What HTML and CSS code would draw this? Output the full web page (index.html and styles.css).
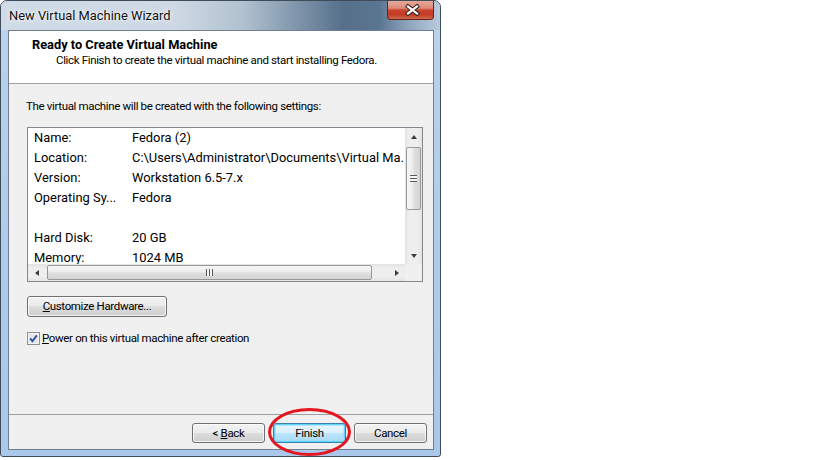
FILE: index.html
```html
<!DOCTYPE html>
<html>
<head>
<meta charset="utf-8">
<link rel="stylesheet" href="styles.css">
</head>
<body>
<div class="window">
  <div class="titlebar">
    <span class="title">New Virtual Machine Wizard</span>
    <div class="close">
      <svg width="45" height="18" viewBox="0 0 45 18">
        <path d="M20 5.5 L29 12.5 M29 5.5 L20 12.5" stroke="#3a2a28" stroke-width="4.2" stroke-linecap="square" fill="none"/>
        <path d="M20 5.5 L29 12.5 M29 5.5 L20 12.5" stroke="#ffffff" stroke-width="2.2" stroke-linecap="square" fill="none"/>
      </svg>
    </div>
  </div>
  <div class="frame">
    <div class="client">
      <div class="header">
        <div class="h-title">Ready to Create Virtual Machine</div>
        <div class="h-sub">Click Finish to create the virtual machine and start installing Fedora.</div>
      </div>
      <div class="body">
        <p class="intro">The virtual machine will be created with the following settings:</p>
        <div class="listbox">
          <div class="list-content">
            <div class="row"><span class="k">Name:</span><span class="v">Fedora (2)</span></div>
            <div class="row"><span class="k">Location:</span><span class="v">C:\Users\Administrator\Documents\Virtual Ma.</span></div>
            <div class="row"><span class="k">Version:</span><span class="v">Workstation 6.5-7.x</span></div>
            <div class="row"><span class="k">Operating Sy...</span><span class="v">Fedora</span></div>
            <div class="row"><span class="k"></span><span class="v"></span></div>
            <div class="row"><span class="k">Hard Disk:</span><span class="v">20 GB</span></div>
            <div class="row"><span class="k">Memory:</span><span class="v">1024 MB</span></div>
          </div>
          <div class="vscroll">
            <div class="sbtn"><span class="arr up"></span></div>
            <div class="vtrack"><div class="vthumb"><span class="grip-h"></span></div></div>
            <div class="sbtn"><span class="arr down"></span></div>
          </div>
          <div class="hscroll">
            <div class="sbtn"><span class="arr left"></span></div>
            <div class="htrack"><div class="hthumb"><span class="grip-v"></span></div></div>
            <div class="sbtn"><span class="arr right"></span></div>
          </div>
          <div class="corner"></div>
        </div>
        <button class="btn customize"><u>C</u>ustomize Hardware...</button>
        <div class="check">
          <span class="box">
            <svg width="13" height="13" viewBox="0 0 13 13">
              <rect x="0.5" y="0.5" width="12" height="12" fill="#f4f4f4" stroke="#8e8f8f"/>
              <rect x="2" y="2" width="9" height="9" fill="#e6e6e6"/>
              <path d="M3.2 6.4 L5.4 9.2 L9.8 3.4" stroke="#2d4fa6" stroke-width="1.9" fill="none"/>
            </svg>
          </span>
          <span class="check-label"><u>P</u>ower on this virtual machine after creation</span>
        </div>
      </div>
      <div class="footer">
        <button class="btn">&lt; <u>B</u>ack</button>
        <button class="btn default">Finish</button>
        <button class="btn">Cancel</button>
      </div>
    </div>
  </div>
  <div class="annotation"></div>
</div>
</body>
</html>
```

FILE: styles.css
```css
html, body {
  margin: 0;
  padding: 0;
  background: #ffffff;
}

body {
  font-family: "Roboto", "Open Sans", sans-serif;
  font-size: 11.5px;
  letter-spacing: -0.35px;
  color: #000;
}

.window {
  position: relative;
  width: 441px;
  height: 457px;
  box-sizing: border-box;
  border: 1px solid #3e4c5a;
  border-radius: 7px 7px 3px 3px;
  background: linear-gradient(180deg, #bcd3eb 0%, #aecbea 60%, #a9c8ea 100%);
  display: flex;
  flex-direction: column;
  overflow: hidden;
}

.titlebar {
  flex: none;
  height: 29px;
  display: flex;
  justify-content: space-between;
  align-items: flex-start;
  background: linear-gradient(90deg, #cfdbe7 0%, #cdd8e4 40%, #b2c1d0 55%, #7d93a9 68%, #56708b 78%, #5a7591 86%, #8fa6bd 93%, #b8cbe0 100%);
}

.title {
  padding: 6px 0 0 8px;
  line-height: 17px;
  font-size: 12.9px;
  letter-spacing: 0;
  color: #111;
  text-shadow: 0 0 6px rgba(255, 255, 255, 0.9), 0 0 3px rgba(255, 255, 255, 0.9);
}

.close {
  width: 47px;
  height: 19px;
  margin-right: 6px;
  box-sizing: border-box;
  border: 1px solid #6b2419;
  border-top: none;
  border-radius: 0 0 4px 4px;
  background: linear-gradient(180deg, #e7a899 0%, #dc8a79 40%, #c9452f 50%, #c23a25 75%, #cf6a4c 100%);
  display: flex;
}

.frame {
  flex: 1;
  display: flex;
  padding: 0 6px 6px 7px;
}

.client {
  flex: 1;
  display: flex;
  flex-direction: column;
  border: 1px solid #6f7f90;
  background: #f0f0f0;
}

.header {
  flex: none;
  height: 53px;
  box-sizing: border-box;
  background: #ffffff;
  border-bottom: 1px solid #a0a0a0;
  padding: 6px 0 0 23px;
}

.h-title {
  font-weight: bold;
  font-size: 12.8px;
  letter-spacing: 0;
  line-height: 15px;
}

.h-sub {
  line-height: 15px;
  margin-top: 1px;
  padding-left: 24px;
}

.body {
  flex: 1;
  display: flex;
  flex-direction: column;
  align-items: flex-start;
  padding: 15px 0 0 18px;
}

.intro {
  margin: 0 0 0 -1px;
  line-height: 15px;
}

.listbox {
  margin-top: 13px;
  width: 396px;
  height: 155px;
  box-sizing: border-box;
  border: 1px solid #828790;
  background: #ffffff;
  display: grid;
  grid-template-columns: 1fr 17px;
  grid-template-rows: 1fr 17px;
}

.list-content {
  overflow: hidden;
  min-width: 0;
  font-size: 12.9px;
  letter-spacing: 0;
}

.row {
  display: flex;
  height: 20px;
  line-height: 20px;
  padding-left: 6px;
  white-space: nowrap;
}

.k {
  flex: none;
  width: 98px;
}

.v {
  flex: none;
}

.vscroll {
  display: flex;
  flex-direction: column;
  background: linear-gradient(90deg, #e3e3e3 0%, #eeeeee 25%, #eeeeee 75%, #e3e3e3 100%);
}

.hscroll {
  display: flex;
  background: linear-gradient(180deg, #e3e3e3 0%, #eeeeee 25%, #eeeeee 75%, #e3e3e3 100%);
}

.corner {
  background: #f0f0f0;
}

.sbtn {
  flex: none;
  width: 17px;
  height: 17px;
  display: flex;
  align-items: center;
  justify-content: center;
}

.arr {
  width: 0;
  height: 0;
  border-style: solid;
  border-color: transparent;
}

.arr.up {
  border-width: 0 3.5px 4px 3.5px;
  border-bottom-color: #3c3c3c;
}

.arr.down {
  border-width: 4px 3.5px 0 3.5px;
  border-top-color: #3c3c3c;
}

.arr.left {
  border-width: 3.5px 4px 3.5px 0;
  border-right-color: #3c3c3c;
}

.arr.right {
  border-width: 3.5px 0 3.5px 4px;
  border-left-color: #3c3c3c;
}

.vtrack {
  flex: 1;
  display: flex;
  flex-direction: column;
  align-items: center;
}

.vthumb {
  margin-top: 2px;
  width: 15px;
  height: 63px;
  box-sizing: border-box;
  border: 1px solid #979797;
  border-radius: 2px;
  background: linear-gradient(90deg, #f7f7f7 0%, #ececec 45%, #dedede 55%, #d5d5d5 100%);
  display: flex;
  align-items: center;
  justify-content: center;
}

.grip-h {
  width: 7px;
  height: 7px;
  background: repeating-linear-gradient(180deg, #5a5a5a 0, #5a5a5a 1px, #f4f4f4 1px, #f4f4f4 3px);
}

.htrack {
  flex: 1;
  display: flex;
  align-items: center;
}

.hthumb {
  margin-left: 2px;
  width: 325px;
  height: 15px;
  box-sizing: border-box;
  border: 1px solid #979797;
  border-radius: 2px;
  background: linear-gradient(180deg, #f7f7f7 0%, #ececec 45%, #dedede 55%, #d5d5d5 100%);
  display: flex;
  align-items: center;
  justify-content: center;
}

.grip-v {
  width: 7px;
  height: 7px;
  background: repeating-linear-gradient(90deg, #5a5a5a 0, #5a5a5a 1px, #f4f4f4 1px, #f4f4f4 3px);
}

.btn {
  font-family: inherit;
  font-size: 11.5px;
  letter-spacing: -0.35px;
  color: #000;
  box-sizing: border-box;
  height: 20px;
  width: 73px;
  padding: 0;
  line-height: 17px;
  border: 1px solid #707070;
  border-radius: 3px;
  background: linear-gradient(180deg, #f2f2f2 0%, #ebebeb 50%, #dddddd 50%, #cfcfcf 100%);
  box-shadow: inset 0 0 0 1px rgba(255, 255, 255, 0.75);
}

.customize {
  margin-top: 14px;
  width: 140px;
  height: 21px;
}

.btn.default {
  border-color: #3c7fb1;
  background: linear-gradient(180deg, #eaf6fd 0%, #d9f0fc 50%, #bee6fd 50%, #a7d9f5 100%);
  box-shadow: inset 0 0 0 1px #5fd4fb, inset 0 0 0 2px rgba(150, 225, 250, 0.6);
}

.check {
  margin-top: 14px;
  display: flex;
  align-items: center;
  line-height: 15px;
}

.box {
  display: flex;
  width: 13px;
  height: 13px;
}

.check-label {
  margin-left: 2px;
}

.footer {
  flex: none;
  height: 35px;
  box-sizing: border-box;
  border-top: 1px solid #a0a0a0;
  padding: 8px 6px 0 0;
  display: flex;
  justify-content: flex-end;
  align-items: flex-start;
  gap: 8px;
}

.annotation {
  position: absolute;
  left: 267px;
  top: 407px;
  width: 83px;
  height: 48px;
  box-sizing: border-box;
  border: 3px solid #e5161f;
  border-radius: 50%;
}
```
